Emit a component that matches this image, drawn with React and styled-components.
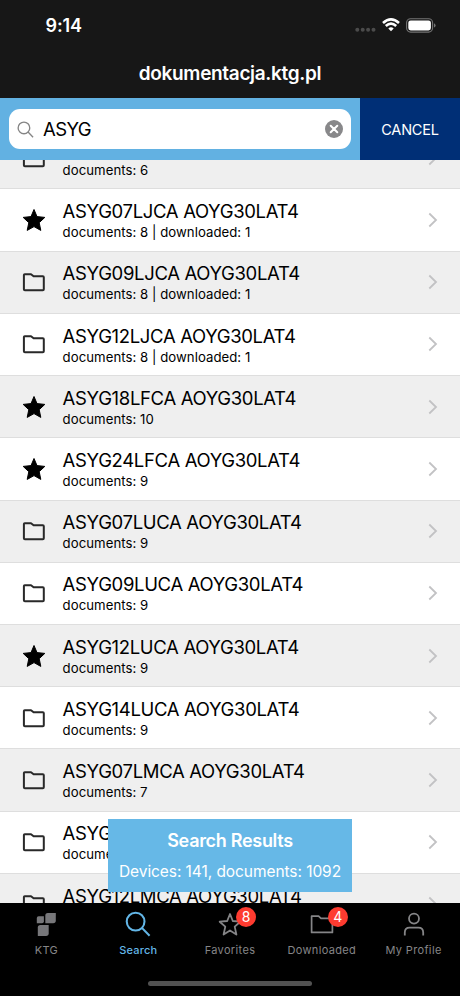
import React from 'react';
import styled, { createGlobalStyle } from 'styled-components';

const GlobalStyle = createGlobalStyle`
  * { box-sizing: border-box; }
  body { margin: 0; background: #000; font-family: Inter, "Liberation Sans", sans-serif; }
`;

const Screen = styled.div`
  display: flex;
  flex-direction: column;
  position: relative;
  width: 460px;
  height: 996px;
  overflow: hidden;
  background: #000;
`;

const StatusBar = styled.div`
  display: flex;
  justify-content: space-between;
  align-items: center;
  flex: none;
  height: 50px;
  padding: 0 24px 0 45.5px;
  background: #171717;
  color: #fff;
`;

const Clock = styled.span`
  font-size: 18px;
  font-weight: 600;
  line-height: 22px;
  letter-spacing: -0.1px;
  margin-top: 1px;
`;

const StatusIcons = styled.div`
  display: flex;
  align-items: center;
  gap: 6px;
  svg { display: block; }
`;

const TitleBar = styled.header`
  flex: none;
  height: 48px;
  padding-top: 12px;
  background: #171717;
  color: #fff;
  text-align: center;
  font-size: 19px;
  font-weight: 600;
  line-height: 24px;
  letter-spacing: -0.33px;
`;

const SearchBar = styled.div`
  display: flex;
  flex: none;
  height: 62px;
  background: #62b1e2;
`;

const SearchField = styled.div`
  display: flex;
  align-items: center;
  flex: 1;
  height: 40px;
  margin: 11px 9px 0;
  padding: 0 8px;
  border-radius: 11px;
  background: #fff;
  svg { display: block; flex: none; }
`;

const Query = styled.span`
  flex: 1;
  margin-left: 9px;
  color: #000;
  font-size: 18.5px;
  line-height: 24px;
  letter-spacing: -0.6px;
`;

const CancelButton = styled.button`
  width: 100px;
  padding: 1px 0 0;
  border: 0;
  background: #002f76;
  color: #fff;
  font-family: inherit;
  font-size: 14.5px;
  letter-spacing: -0.2px;
`;

const List = styled.main`
  flex: none;
  height: 743px;
  overflow: hidden;
  background: #fff;
`;

const Rows = styled.div`
  margin-top: -32.8px;
`;

const Row = styled.div`
  display: flex;
  align-items: center;
  height: 62.22px;
  padding: 0 22px;
  border-bottom: 1px solid #dedede;
  background: ${(p) => (p.$shaded ? '#efefef' : '#fff')};
  svg { display: block; flex: none; }
`;

const RowText = styled.div`
  flex: 1;
  margin-left: 16.6px;
  padding-top: 1.2px;
  white-space: nowrap;
`;

const DeviceName = styled.div`
  color: #000;
  font-size: 18.5px;
  line-height: 23px;
  letter-spacing: -0.34px;
`;

const DeviceMeta = styled.div`
  color: #000;
  font-size: 13.2px;
  line-height: 17px;
  letter-spacing: 0.04px;
  margin-top: 1px;
`;

const Toast = styled.aside`
  position: absolute;
  left: 108px;
  top: 819px;
  width: 244px;
  height: 73px;
  padding-top: 11px;
  background: #66b8e7;
  color: #fff;
  text-align: center;
  white-space: nowrap;
`;

const ToastTitle = styled.div`
  font-size: 18px;
  font-weight: 600;
  line-height: 22px;
  letter-spacing: -0.3px;
`;

const ToastText = styled.div`
  margin-top: 10px;
  font-size: 15.5px;
  line-height: 20px;
  letter-spacing: -0.07px;
`;

const TabBar = styled.nav`
  display: grid;
  grid-template-columns: repeat(5, 91.8px);
  flex: none;
  height: 78px;
  padding-left: 0.5px;
  background: #000;
`;

const Tab = styled.div`
  display: flex;
  flex-direction: column;
  align-items: center;
  color: ${(p) => (p.$active ? '#63b6e7' : '#858587')};
`;

const TabIcon = styled.div`
  position: relative;
  width: 26px;
  height: 26px;
  margin-top: 8px;
  svg { display: block; }
`;

const Badge = styled.span`
  position: absolute;
  left: 19px;
  top: -4px;
  width: 20px;
  height: 20px;
  border-radius: 50%;
  background: #fe3b30;
  color: #fff;
  text-align: center;
  font-size: 14px;
  line-height: 20px;
`;

const TabLabel = styled.span`
  margin-top: 6px;
  font-size: 11px;
  font-weight: ${(p) => (p.$active ? 500 : 400)};
  line-height: 14px;
  letter-spacing: ${(p) => (p.$active ? '0.2px' : '0.35px')};
`;

const HomeIndicator = styled.div`
  flex: none;
  align-self: center;
  width: 164px;
  height: 5px;
  border-radius: 3px;
  background: #515151;
`;

const SignalDots = () => (
  <svg width="21" height="16" viewBox="0 0 21 16" fill="#4b4b4b">
    {[2.3, 7.7, 13.1, 18.5].map((x) => <circle key={x} cx={x} cy="12.7" r="2" />)}
  </svg>
);

const Wifi = () => (
  <svg width="18" height="14" viewBox="0 0 18 14" fill="none" stroke="#fff" strokeWidth="2.6">
    <path d="M1 5 Q9 -2.2 17 5" />
    <path d="M3.8 8 Q9 3.2 14.2 8" />
    <path d="M9 13.2 L6.3 10.5 Q9 8.2 11.7 10.5Z" fill="#fff" stroke="none" />
  </svg>
);

const Battery = () => (
  <svg width="30" height="15" viewBox="0 0 30 15">
    <rect x=".6" y=".7" width="26" height="13.4" rx="4" fill="none" stroke="#747474" strokeWidth="1.1" />
    <rect x="2.3" y="2.4" width="22.6" height="10" rx="2.4" fill="#fff" />
    <path d="M28 5.2 Q29.6 6 29.6 7.4 Q29.6 8.8 28 9.6Z" fill="#747474" />
  </svg>
);

const Magnifier = ({ size, stroke }) => (
  <svg width={size} height={size} viewBox="0 0 24 24" fill="none" stroke="currentColor" strokeWidth={stroke}>
    <circle cx="9.8" cy="9.8" r="8.2" />
    <path d="M15.6 15.6 L22.7 22.9" />
  </svg>
);

const GreyIcon = styled.span`
  display: block;
  color: #858585;
`;

const ClearIcon = () => (
  <svg width="18" height="18" viewBox="0 0 18 18">
    <circle cx="9" cy="9" r="9" fill="#88888a" />
    <path d="M5.7 5.7 L12.3 12.3 M12.3 5.7 L5.7 12.3" stroke="#fff" strokeWidth="2" strokeLinecap="round" />
  </svg>
);

const FolderIcon = () => (
  <svg width="24" height="24" viewBox="0 0 24 24" fill="none" stroke="#292929" strokeWidth="2" strokeLinejoin="round">
    <path d="M2.7 4.2 H9 L11.6 6.3 H20.8 Q21.8 6.3 21.8 7.3 V19.3 Q21.8 20.3 20.8 20.3 H2.9 Q1.9 20.3 1.9 19.3 V5 Q1.9 4.2 2.7 4.2Z" />
  </svg>
);

const StarIcon = () => (
  <svg width="24" height="24" viewBox="0 0 24 24">
    <path d="M12 1.5 L15 8.6 L22.8 9.4 L17.2 14.7 L18.8 22.4 L12 18.6 L5.2 22.4 L6.8 14.7 L1.2 9.4 L9 8.6Z" fill="#000" stroke="#000" strokeWidth="1" strokeLinejoin="round" />
  </svg>
);

const Chevron = () => (
  <svg width="10" height="16" viewBox="0 0 10 16" fill="none" stroke="#c2c2c4" strokeWidth="1.8">
    <path d="M1.3 1.5 L8 8 L1.3 14.5" />
  </svg>
);

const KtgIcon = () => (
  <svg width="26" height="26" viewBox="0 0 26 26" fill="#77777a">
    <path d="M5.6 5.2 H10.9 V10.4 Q10.9 12.2 9.1 12.2 H3.8 V7 Q3.8 5.2 5.6 5.2Z" />
    <path d="M14.8 2 H22.8 V9.6 Q22.8 12.2 20.2 12.2 H12.3 V4.5 Q12.3 2 14.8 2Z" />
    <path d="M7.4 13.9 H15.7 V22.3 Q15.7 25 13 25 H4.8 V16.5 Q4.8 13.9 7.4 13.9Z" />
  </svg>
);

const TabStar = () => (
  <svg width="26" height="26" viewBox="0 0 26 26" fill="none" stroke="currentColor" strokeWidth="1.8" strokeLinejoin="round">
    <path d="M13 3 L15.8 10 L23.3 10.7 L17.7 15.6 L19.4 23.5 L13 19.4 L6.6 23.5 L8.3 15.6 L2.7 10.7 L10.2 10Z" />
  </svg>
);

const TabFolder = () => (
  <svg width="26" height="26" viewBox="0 0 26 26" fill="none" stroke="currentColor" strokeWidth="1.7" strokeLinejoin="round">
    <path d="M2.6 5.2 H9.6 L12 7.4 H23.4 V21.4 H2.6Z" />
  </svg>
);

const ProfileIcon = () => (
  <svg width="26" height="26" viewBox="0 0 26 26" fill="none" stroke="currentColor" strokeWidth="1.8">
    <circle cx="13" cy="7.6" r="5" />
    <path d="M3.8 24.5 V21.4 Q3.8 16.6 8.6 16.6 H17.4 Q22.2 16.6 22.2 21.4 V24.5" />
  </svg>
);

const devices = [
  ['ASYG14LJCA AOYG30LAT4', 'documents: 6', false],
  ['ASYG07LJCA AOYG30LAT4', 'documents: 8 | downloaded: 1', true],
  ['ASYG09LJCA AOYG30LAT4', 'documents: 8 | downloaded: 1', false],
  ['ASYG12LJCA AOYG30LAT4', 'documents: 8 | downloaded: 1', false],
  ['ASYG18LFCA AOYG30LAT4', 'documents: 10', true],
  ['ASYG24LFCA AOYG30LAT4', 'documents: 9', true],
  ['ASYG07LUCA AOYG30LAT4', 'documents: 9', false],
  ['ASYG09LUCA AOYG30LAT4', 'documents: 9', false],
  ['ASYG12LUCA AOYG30LAT4', 'documents: 9', true],
  ['ASYG14LUCA AOYG30LAT4', 'documents: 9', false],
  ['ASYG07LMCA AOYG30LAT4', 'documents: 7', false],
  ['ASYG09LMCA AOYG30LAT4', 'documents: 7', false],
  ['ASYG12LMCA AOYG30LAT4', 'documents: 7', false],
];

const tabs = [
  { label: 'KTG', icon: <KtgIcon /> },
  { label: 'Search', icon: <Magnifier size={26} stroke={1.9} />, active: true },
  { label: 'Favorites', icon: <TabStar />, badge: 8 },
  { label: 'Downloaded', icon: <TabFolder />, badge: 4 },
  { label: 'My Profile', icon: <ProfileIcon /> },
];

export default function App() {
  return (
    <Screen>
      <GlobalStyle />
      <StatusBar>
        <Clock>9:14</Clock>
        <StatusIcons><SignalDots /><Wifi /><Battery /></StatusIcons>
      </StatusBar>
      <TitleBar>dokumentacja.ktg.pl</TitleBar>
      <SearchBar>
        <SearchField>
          <GreyIcon><Magnifier size={17} stroke={1.9} /></GreyIcon>
          <Query>ASYG</Query>
          <ClearIcon />
        </SearchField>
        <CancelButton>CANCEL</CancelButton>
      </SearchBar>
      <List>
        <Rows>
          {devices.map(([name, meta, starred], i) => (
            <Row key={name} $shaded={i % 2 === 0}>
              {starred ? <StarIcon /> : <FolderIcon />}
              <RowText>
                <DeviceName>{name}</DeviceName>
                <DeviceMeta>{meta}</DeviceMeta>
              </RowText>
              <Chevron />
            </Row>
          ))}
        </Rows>
      </List>
      <Toast>
        <ToastTitle>Search Results</ToastTitle>
        <ToastText>Devices: 141, documents: 1092</ToastText>
      </Toast>
      <TabBar>
        {tabs.map((t) => (
          <Tab key={t.label} $active={t.active}>
            <TabIcon>
              {t.icon}
              {t.badge && <Badge>{t.badge}</Badge>}
            </TabIcon>
            <TabLabel $active={t.active}>{t.label}</TabLabel>
          </Tab>
        ))}
      </TabBar>
      <HomeIndicator />
    </Screen>
  );
}
